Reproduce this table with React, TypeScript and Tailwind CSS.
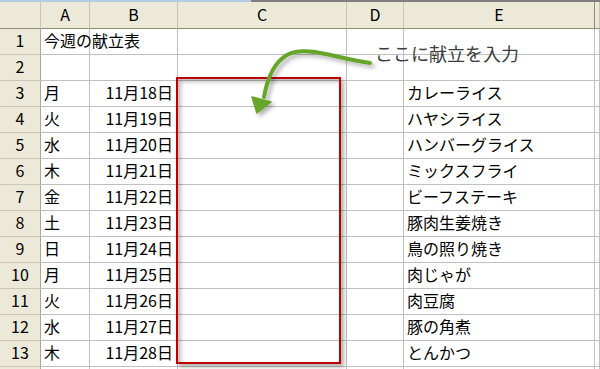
import React from "react"

const cols = ["A", "B", "C", "D", "E", ""]

const rows: { day: string; date: string; menu: string }[] = [
  { day: "月", date: "11月18日", menu: "カレーライス" },
  { day: "火", date: "11月19日", menu: "ハヤシライス" },
  { day: "水", date: "11月20日", menu: "ハンバーグライス" },
  { day: "木", date: "11月21日", menu: "ミックスフライ" },
  { day: "金", date: "11月22日", menu: "ビーフステーキ" },
  { day: "土", date: "11月23日", menu: "豚肉生姜焼き" },
  { day: "日", date: "11月24日", menu: "鳥の照り焼き" },
  { day: "月", date: "11月25日", menu: "肉じゃが" },
  { day: "火", date: "11月26日", menu: "肉豆腐" },
  { day: "水", date: "11月27日", menu: "豚の角煮" },
  { day: "木", date: "11月28日", menu: "とんかつ" },
]

const grid = "grid grid-cols-[41px_49px_88px_169px_57px_191px_1fr]"
const cell = "h-[26px] pb-[3px] border-r border-b border-[#c0c0c0] flex items-center overflow-visible whitespace-nowrap"

function RowHead({ n }: { n?: number }) {
  return (
    <div className="h-[26px] pb-[3px] bg-[#ece9d8] border-r border-r-[#aca899] border-b border-b-[#cbc7b8] flex items-center justify-center">
      {n}
    </div>
  )
}

function Row({ n, a = "", b = "", e = "" }: { n?: number; a?: string; b?: string; e?: string }) {
  return (
    <div className={grid}>
      <RowHead n={n} />
      <div className={`${cell} pl-[3px]`}>{a}</div>
      <div className={`${cell} justify-end pr-[4px]`}>{b}</div>
      <div className={cell} />
      <div className={cell} />
      <div className={`${cell} pl-[3px]`}>{e}</div>
      <div className={cell} />
    </div>
  )
}

export default function App() {
  return (
    <div
      className="relative w-[600px] h-[369px] overflow-hidden bg-white text-[16px] text-black leading-none"
      style={{ fontFamily: '"Noto Sans CJK JP", "Noto Sans", sans-serif' }}
    >
      <div className="flex h-[2px]">
        <div className="w-[251px] bg-[#b4cbe6]" />
        <div className="flex-1 bg-[#7f7f7f]" />
      </div>

      {/* column header */}
      <div className={`${grid} bg-[#ece9d8]`}>
        <div className="h-[27px] border-r border-r-[#c8c5b5] border-b border-b-[#8f8d76]" />
        {cols.map((c, i) => (
          <div
            key={i}
            className={
              "h-[27px] pb-[3px] border-b border-b-[#8f8d76] border-r flex items-center justify-center " +
              (i === 4 ? "border-r-[#8f8d76]" : "border-r-[#c8c5b5]")
            }
          >
            {c}
          </div>
        ))}
      </div>

      {/* body */}
      <div className={grid}>
        <RowHead n={1} />
        <div className={`${cell} pl-[3px]`}>今週の献立表</div>
        <div className={cell} />
        <div className={cell} />
        <div className={cell} />
        <div className={cell} />
        <div className={cell} />
      </div>
      <Row n={2} />
      {rows.map((r, i) => (
        <Row key={i} n={i + 3} a={r.day} b={r.date} e={r.menu} />
      ))}
      <Row />

      {/* input area marker */}
      <div className="absolute left-[176px] top-[77px] w-[165px] h-[287px] border-2 border-[#c00000] shadow-[3px_3px_4px_rgba(0,0,0,0.3),inset_3px_3px_4px_rgba(0,0,0,0.25)]" />

      {/* callout */}
      <svg className="absolute inset-0" width="600" height="369" viewBox="0 0 600 369">
        <defs>
          <filter id="sh" x="-20%" y="-20%" width="140%" height="140%">
            <feDropShadow dx="3" dy="3" stdDeviation="2" floodColor="#000" floodOpacity="0.3" />
          </filter>
        </defs>
        <g filter="url(#sh)" fill="none">
          <path
            d="M370 63 C 335 58, 305 45, 287 55 C 273 63, 267 80, 264 97"
            stroke="#66a52c"
            strokeWidth="4"
            strokeLinecap="round"
          />
          <polygon points="252,97 271,102 257,113" fill="#66a52c" stroke="#66a52c" strokeWidth="1.5" strokeLinejoin="round" />
        </g>
      </svg>
      <div className="absolute left-[375px] top-[44px] text-[18px] text-[#3c3c3c] whitespace-nowrap">
        ここに献立を入力
      </div>
    </div>
  )
}
